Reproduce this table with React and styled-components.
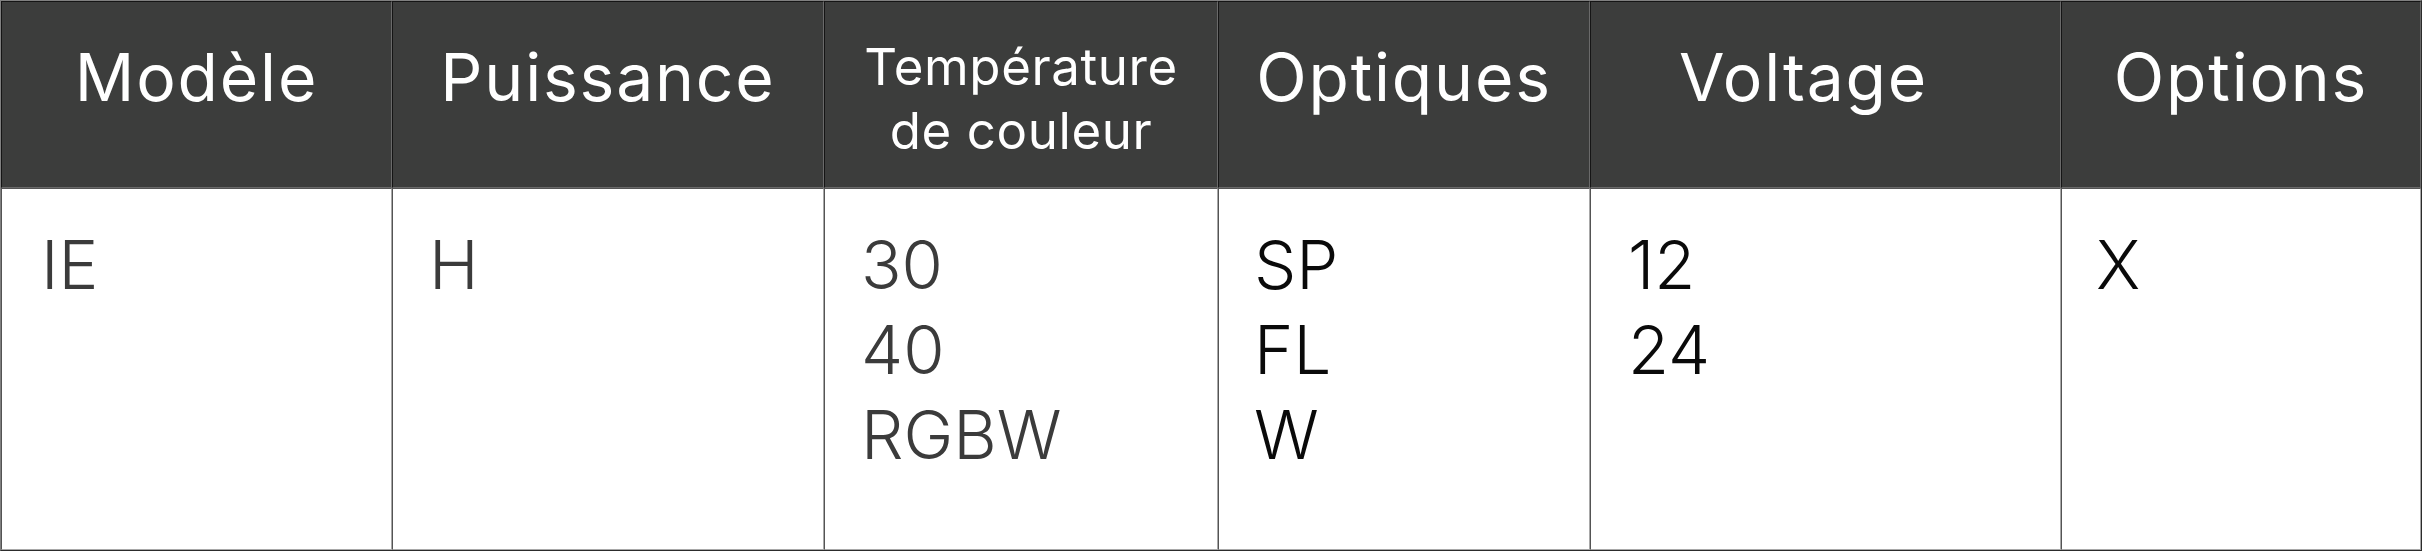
import React from "react";
import styled, { createGlobalStyle } from "styled-components";

const GlobalStyle = createGlobalStyle`
  html, body {
    margin: 0;
    padding: 0;
    background: #ffffff;
  }
`;

const Table = styled.table`
  width: 2420px;
  height: 551px;
  border-collapse: separate;
  border-spacing: 0;
  border: 1px outset #808080;
  font-family: Inter, "Noto Sans", sans-serif;
  table-layout: fixed;
`;

const HeadRow = styled.tr`
  height: 187px;
`;

const HeadCell = styled.th`
  padding: ${({ $small }) => ($small ? "33px 16px 0" : "30px 16px 0")};
  padding-right: ${({ $shift }) => 16 + ($shift || 0)}px;
  vertical-align: top;
  background: #3c3d3c;
  color: #ffffff;
  border: 1px inset #6a6a6a;
  font-size: ${({ $small }) => ($small ? "51px" : "66px")};
  font-weight: 400;
  letter-spacing: ${({ $small }) => ($small ? "0.6px" : "1.8px")};
  line-height: ${({ $small }) => ($small ? "64px" : "90px")};
  text-align: center;
`;

const BodyCell = styled.td`
  padding: 33px 0 0 ${({ $pad }) => $pad || 40}px;
  vertical-align: top;
  border: 1px inset #a8a8a8;
  color: ${({ $dark }) => ($dark ? "#0a0a0a" : "#3b3b3b")};
  font-size: 67px;
  font-weight: 300;
  line-height: 85px;
`;

const Line = styled.div`
  white-space: nowrap;
`;

const columns = [
  { width: 391, title: "Modèle", values: ["IE"], pad: 39 },
  { width: 432, title: "Puissance", values: ["H"], pad: 36 },
  { width: 394, title: ["Température", "de couleur"], values: ["30", "40", "RGBW"], pad: 36 },
  { width: 372, title: "Optiques", values: ["SP", "FL", "W"], pad: 35, dark: true },
  { width: 471, title: "Voltage", values: ["12", "24"], pad: 37, dark: true, shift: 44 },
  { width: 360, title: "Options", values: ["X"], pad: 34, dark: true },
];

const App = () => (
  <>
    <GlobalStyle />
    <Table>
      <colgroup>
        {columns.map((col) => (
          <col key={col.width} style={{ width: col.width }} />
        ))}
      </colgroup>
      <thead>
        <HeadRow>
          {columns.map((col, i) =>
            Array.isArray(col.title) ? (
              <HeadCell key={i} $small>
                {col.title.map((t) => (
                  <Line key={t}>{t}</Line>
                ))}
              </HeadCell>
            ) : (
              <HeadCell key={i} $shift={col.shift}>
                {col.title}
              </HeadCell>
            )
          )}
        </HeadRow>
      </thead>
      <tbody>
        <tr>
          {columns.map((col, i) => (
            <BodyCell key={i} $pad={col.pad} $dark={col.dark}>
              {col.values.map((v) => (
                <Line key={v}>{v}</Line>
              ))}
            </BodyCell>
          ))}
        </tr>
      </tbody>
    </Table>
  </>
);

export default App;
